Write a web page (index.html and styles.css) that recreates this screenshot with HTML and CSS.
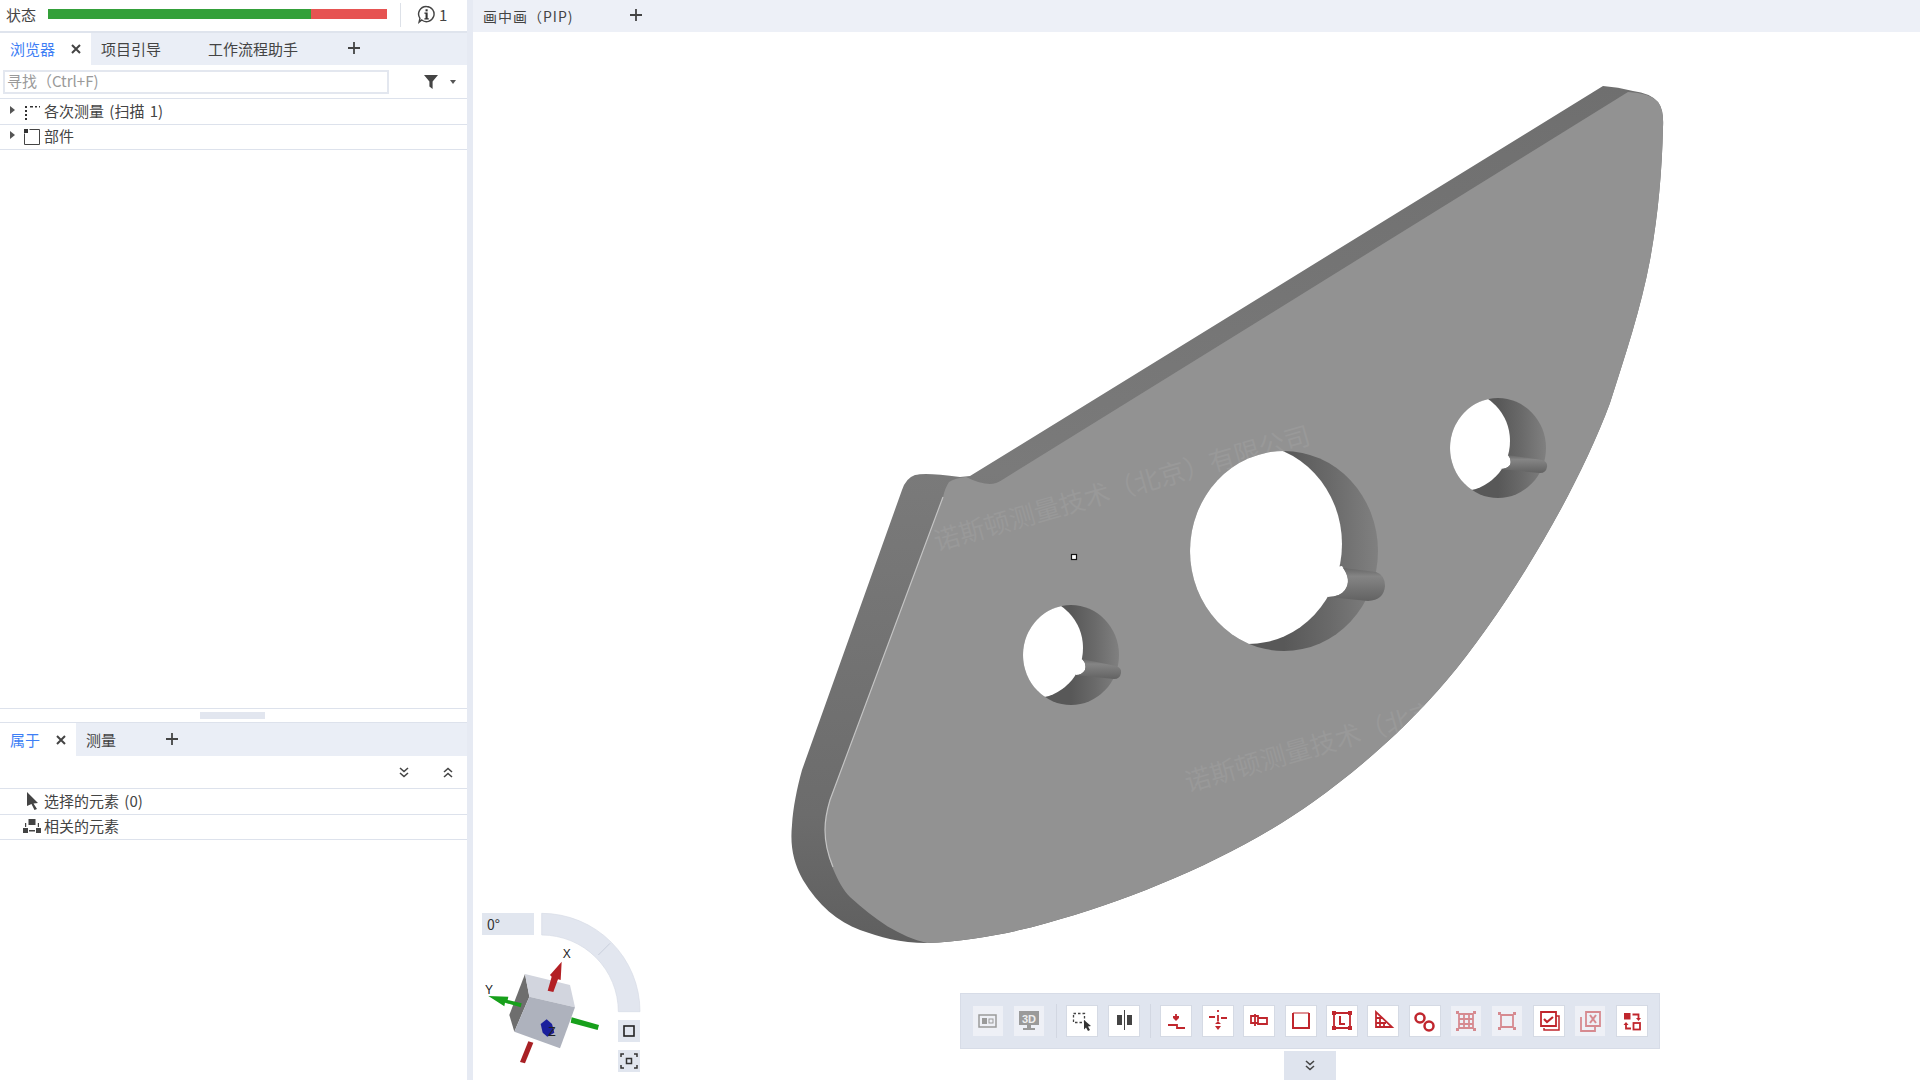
FILE: index.html
```html
<!DOCTYPE html>
<html lang="zh">
<head>
<meta charset="utf-8">
<title>画中画</title>
<link rel="stylesheet" href="styles.css">
</head>
<body>
<div class="app">
  <aside class="side">
    <div class="status">
      <span class="status-label">状态</span>
      <div class="meter"><div class="meter-ok"></div><div class="meter-bad"></div></div>
      <div class="info">
        <svg class="info-icon" viewBox="0 0 20 20"><path d="M10 1.5a8 8 0 1 1-5 14.3L2.2 18l.9-4A8 8 0 0 1 10 1.5z" fill="none" stroke="#444" stroke-width="1.5"/><rect x="9" y="4.5" width="2.2" height="2.2" fill="#333"/><path d="M7.8 8h3.4v6h1.2v1.2H7.800V14h1.200V9.200H7.800z" fill="#333"/></svg>
        <span>1</span>
      </div>
    </div>
    <div class="tabs">
      <div class="tab active tab-browser"><span>浏览器</span><svg class="x" viewBox="0 0 10 10"><path d="M1 1l8 8M9 1l-8 8"/></svg></div>
      <div class="tab tab-guide">项目引导</div>
      <div class="tab tab-flow">工作流程助手</div>
      <svg class="plus" viewBox="0 0 12 12"><path d="M6 0v12M0 6h12"/></svg>
    </div>
    <div class="search-row">
      <div class="search">寻找（Ctrl+F)</div>
      <svg class="funnel" viewBox="0 0 14 14"><path d="M0 0h14L8.600 6.500V14L5.400 11.500v-5z" fill="#444"/></svg>
      <svg class="caret" viewBox="0 0 6 4"><path d="M0 0h6L3 4z" fill="#555"/></svg>
    </div>
    <div class="row">
      <svg class="tri" viewBox="0 0 5 8"><path d="M0 0l5 4-5 4z" fill="#555"/></svg>
      <svg class="row-icon" viewBox="0 0 16 16"><path d="M1 2h2v2H1zM1 6h2v2H1zM1 10h2v2H1zM1 14h2v2H1zM6 2h3v1.400H6zM11 2h2v1.400h-2zM15 2h1v1.400h-1z" fill="#333"/></svg>
      <span class="row-text">各次测量 (扫描 1)</span>
    </div>
    <div class="row row-short">
      <svg class="tri" viewBox="0 0 5 8"><path d="M0 0l5 4-5 4z" fill="#555"/></svg>
      <svg class="row-icon" viewBox="0 0 16 16"><path d="M.5 4.500v11h15V.5h-10" fill="none" stroke="#444"/><rect x="0" y="0" width="4" height="4" fill="#333"/></svg>
      <span class="row-text">部件</span>
    </div>
    <div class="tree-space"></div>
    <div class="splitter"><div class="grip"></div></div>
    <div class="tabs tabs-bottom">
      <div class="tab active tab-props"><span>属于</span><svg class="x" viewBox="0 0 10 10"><path d="M1 1l8 8M9 1l-8 8"/></svg></div>
      <div class="tab tab-measure">测量</div>
      <svg class="plus" viewBox="0 0 12 12"><path d="M6 0v12M0 6h12"/></svg>
    </div>
    <div class="actions">
      <svg class="chev" viewBox="0 0 10 11"><path d="M1 1l4 3.500L9 1M1 6l4 3.500L9 6"/></svg>
      <svg class="chev" viewBox="0 0 10 11"><path d="M1 5l4-3.500L9 5M1 10l4-3.500L9 10"/></svg>
    </div>
    <div class="row">
      <svg class="row-icon row-cursor" viewBox="0 0 14 18"><path d="M2 0l11 11-4.500 .5L12 17l-2.500 1-3-6L2 14z" fill="#444"/></svg>
      <span class="row-text">选择的元素 (0)</span>
    </div>
    <div class="row row-short">
      <svg class="row-icon row-rel" viewBox="0 0 18 14"><path d="M5.500 0h7v6h-7zM0 9h5v5H0zM13 9h5v5h-5zM6 11h6v1.500H6zM2 4h1.200v4H2zM14.800 4H16v4h-1.200z" fill="#444"/></svg>
      <span class="row-text">相关的元素</span>
    </div>
    <div class="props-space"></div>
  </aside>
  <div class="gutter"></div>
  <main class="view">
    <div class="view-tabs">
      <span class="view-title">画中画（PIP)</span>
      <svg class="plus" viewBox="0 0 12 12"><path d="M6 0v12M0 6h12"/></svg>
    </div>
    <div class="canvas"></div>

    <svg class="model" viewBox="473 0 1447 1080">
      <defs>
        <path id="body" d="M970 476L1603 86Q1618 87 1633 91Q1650 93 1658 102Q1664 110 1663 127C1662 172 1658 216 1650 260C1641 308 1625 356 1610 403C1575 497 1505 611 1447 680C1408 726 1362 767 1313 802C1236 857 1134 899 1047 923C1008 934 968 941 927 943C900 943 880 937 860 930C838 922 818 905 803 880C793 862 790 845 792 825C793 808 797 788 802 770L902 490Q906 478 915 475Q925 472 960 477Z"/>
        <path id="face" d="M949 482Q955 478 966 477Q980 484 990 484Q996 484 1002 480L1628 92Q1650 93 1658 102Q1664 110 1663 127C1662 172 1658 216 1650 260C1641 308 1625 356 1610 403C1575 497 1505 611 1447 680C1408 726 1362 767 1313 802C1236 857 1134 899 1047 923C1008 934 968 941 927 943C900 937 875 920 850 897C838 885 825 855 825 830C825 820 827 810 830 800L943 497Q945 488 949 482Z"/>
        <clipPath id="faceClip"><use href="#face"/></clipPath>
        <ellipse id="holeA" cx="1284" cy="551" rx="94" ry="100"/>
        <ellipse id="holeB" cx="1071" cy="655" rx="48" ry="50"/>
        <ellipse id="holeC" cx="1498" cy="448" rx="48" ry="50"/>
        <clipPath id="clipA"><use href="#holeA"/></clipPath>
        <clipPath id="clipB"><use href="#holeB"/></clipPath>
        <clipPath id="clipC"><use href="#holeC"/></clipPath>
        <linearGradient id="bodyGrad" x1="0" y1="0" x2="0" y2="1">
          <stop offset="0" stop-color="#6f6f6f"/><stop offset=".45" stop-color="#7a7a7a"/><stop offset=".85" stop-color="#6c6c6c"/><stop offset="1" stop-color="#5f5f5f"/>
        </linearGradient>
        <linearGradient id="rimGrad" x1="0" y1="0" x2="1" y2="0">
          <stop offset=".5" stop-color="#585858"/><stop offset=".75" stop-color="#6a6a6a"/><stop offset="1" stop-color="#808080"/>
        </linearGradient>
        <linearGradient id="slotGrad" x1="0" y1="0" x2="0" y2="1">
          <stop offset="0" stop-color="#666666"/><stop offset=".25" stop-color="#858585"/><stop offset="1" stop-color="#626262"/>
        </linearGradient>
      </defs>
      <use href="#body" fill="url(#bodyGrad)"/>
      <use href="#face" fill="#929292"/>
      <path class="edge-light" d="M943 497L830 800C827 810 825 820 825 830C825 845 828 855 833 867"/>
      <g clip-path="url(#faceClip)" class="watermark">
        <text x="937" y="551" transform="rotate(-16 937 551)">诺斯顿测量技术（北京）有限公司</text>
        <text x="1188" y="792" transform="rotate(-16 1188 792)">诺斯顿测量技术（北京）有限公司</text>
      </g>

      <use href="#holeA" fill="url(#rimGrad)"/>
      <g clip-path="url(#clipA)"><use href="#holeA" x="-36" y="-7" fill="#fff"/></g>
      <path d="M1342 566Q1352 580 1345 590Q1340 597 1328 597L1318 590L1318 570Z" fill="#fff"/>
      <path d="M1343 568L1376 572Q1385 575 1385 586Q1384 600 1368 601L1328 597Q1340 597 1345 590Q1352 580 1343 568Z" fill="url(#slotGrad)"/>

      <use href="#holeB" fill="url(#rimGrad)"/>
      <g clip-path="url(#clipB)"><use href="#holeB" x="-36" y="-7" fill="#fff"/></g>
      <path d="M1082 659Q1087 664 1085 670Q1082 675 1076 675L1070 665Z" fill="#fff"/>
      <path d="M1082 659L1116 666Q1122 668 1121 673Q1120 679 1114 679L1076 675Q1082 675 1085 670Q1087 664 1082 659Z" fill="url(#slotGrad)"/>

      <use href="#holeC" fill="url(#rimGrad)"/>
      <g clip-path="url(#clipC)"><use href="#holeC" x="-36" y="-7" fill="#fff"/></g>
      <path d="M1508 455Q1512 460 1510 465Q1507 469 1500 469L1495 460Z" fill="#fff"/>
      <path d="M1508 455L1542 460Q1548 462 1547 467Q1546 473 1540 473L1500 469Q1507 469 1510 465Q1512 460 1508 455Z" fill="url(#slotGrad)"/>

      <rect class="marker" x="1071.500" y="554.500" width="5" height="5"/>
    </svg>

    <div class="gizmo">
      <div class="angle">0°</div>
      <svg class="gizmo-art" viewBox="0 0 600 540">
        <path class="arc" d="M215 40A295 295 0 0 1 510 335H445A230 230 0 0 0 215 105Z"/>
        <path class="arc-line" d="M385 165L420 130"/>
        <path d="M165 222L118 345L133 395L178 290Z" fill="#6e6e6e"/>
        <path d="M165 222L300 255L315 322L178 290Z" fill="#d2d5de"/>
        <path d="M178 290L315 322L270 445L133 395Z" fill="#aeb2bd"/>
        <path d="M233 272L245 230L240 225L275 185L272 240L264 238L250 276Z" fill="#b32025"/>
        <path d="M55 288L115 290L113 300L155 310L152 322L105 308L103 319Z" fill="#17a01b"/>
        <path d="M305 352L387 375L383 390L302 368Z" fill="#17a01b"/>
        <path d="M175 424L190 428L165 490L150 486Z" fill="#a82024"/>
        <path d="M212 372L230 358L246 372L253 398L232 410L218 398Z" fill="#1a1f9c"/>
        <text class="axis" x="278" y="175">X</text>
        <text class="axis" x="45" y="282">Y</text>
        <text class="axis" x="235" y="407">Z</text>
      </svg>
      <div class="gz-btn gz-square"><svg viewBox="0 0 22 22"><rect x="6" y="6" width="10" height="10" fill="none" stroke="#222" stroke-width="1.600"/></svg></div>
      <div class="gz-btn gz-focus"><svg viewBox="0 0 22 22"><path d="M3 7V4h3M16 4h3v3M19 15v3h-3M6 18H3v-3" fill="none" stroke="#333" stroke-width="1.500"/><rect x="8.500" y="8.500" width="5" height="5" fill="none" stroke="#333" stroke-width="1.500"/></svg></div>
    </div>

    <div class="toolbar">
      <div class="tool off"><svg viewBox="0 0 30 30"><rect x="6" y="9" width="17" height="12" fill="none" stroke="#9a9a9a" stroke-width="1.500"/><rect x="9" y="12" width="5" height="6" fill="#9a9a9a"/><rect x="16" y="13" width="4" height="4" fill="none" stroke="#9a9a9a"/></svg></div>
      <div class="tool off"><svg viewBox="0 0 30 30"><rect x="5" y="5" width="20" height="14" fill="#9a9a9a"/><text class="t3d" x="15" y="16.500">3D</text><path d="M13 19h4v3h4v2H9v-2h4z" fill="#9a9a9a"/></svg></div>
      <div class="sep"></div>
      <div class="tool"><svg viewBox="0 0 30 30"><rect x="6.500" y="7.500" width="11" height="9" fill="none" stroke="#444" stroke-width="1.300" stroke-dasharray="2.500 2"/><path d="M17 14l7 6-3 .5 2 3.500-2 1-2-3.500-2 2z" fill="#333"/></svg></div>
      <div class="tool"><svg viewBox="0 0 30 30"><rect x="8" y="9" width="5" height="10" fill="#444"/><rect x="18" y="9" width="5" height="10" fill="#444"/><path d="M15.500 4v20" stroke="#444" stroke-width="1"/></svg></div>
      <div class="sep"></div>
      <div class="tool"><svg class="red" viewBox="0 0 30 30"><path d="M7 19h9v3h8"/><path d="M15 8v6M12 11h6"/><path class="fill" d="M12 12h6l-3 3z"/></svg></div>
      <div class="tool"><svg class="red" viewBox="0 0 30 30"><path d="M6 11h6M18 12h6M15 4v2M15 9v6"/><path class="fill" d="M12 18h6l-3-3zM12 20h6l-3 4z"/></svg></div>
      <div class="tool"><svg class="red" viewBox="0 0 30 30"><path d="M7 10h7v7H7zM14 12h9v6h-9zM11 8v12"/></svg></div>
      <div class="tool"><svg class="red" viewBox="0 0 30 30"><path d="M7 7v15h16V7" stroke-width="2"/><path d="M7 7h16" stroke-width="1"/></svg></div>
      <div class="tool"><svg class="red" viewBox="0 0 30 30"><path d="M7 7h16v15H7z"/><path d="M13 10v8h5" stroke-width="2"/><path class="fill" d="M5 5h4v4H5zM21 5h4v4h-4zM5 20h4v4H5zM21 20h4v4h-4z"/></svg></div>
      <div class="tool"><svg class="red" viewBox="0 0 30 30"><path d="M8 6v15h16z" stroke-width="1.800"/><path d="M8 12h6M8 17h10M12 12v8M16 16v5"/></svg></div>
      <div class="tool"><svg class="red" viewBox="0 0 30 30"><circle cx="10" cy="12" r="4.500" stroke-width="2.500"/><circle cx="19" cy="20" r="4.500" stroke-width="2.500"/></svg></div>
      <div class="tool off"><svg class="red faint" viewBox="0 0 30 30"><path d="M8 8h14v14H8zM8 13h14M8 18h14M13 8v14M18 8v14"/><path class="fill" d="M5 5h3v3H5zM22 5h3v3h-3zM5 22h3v3H5zM22 22h3v3h-3z"/></svg></div>
      <div class="tool off"><svg class="red faint" viewBox="0 0 30 30"><path d="M9 9h12v12H9z"/><path class="fill" d="M6 6h3v3H6zM21 6h3v3h-3zM6 21h3v3H6zM21 21h3v3h-3z"/></svg></div>
      <div class="tool"><svg class="red" viewBox="0 0 30 30"><path d="M7 6h15v14H7z" stroke-width="1.800"/><path d="M10 22v2h15V10h-3" stroke-width="1.500"/><path d="M10 13l3 3 6-5" stroke-width="2.200"/></svg></div>
      <div class="tool off"><svg class="red faint" viewBox="0 0 30 30"><path d="M11 6h14v14H11zM6 11v14h14v-5"/><path d="M15 9l6 8M21 9l-6 8" stroke-width="2"/></svg></div>
      <div class="tool"><svg class="red" viewBox="0 0 30 30"><rect class="fill" x="7" y="7" width="6.500" height="6.500"/><path d="M15.500 8.500h6v4"/><path class="fill" d="M19 12h5l-2.500 3z"/><rect x="16.500" y="17" width="6.500" height="6.500"/><path d="M14 22.500H9v-4"/><path class="fill" d="M6.500 19h5L9 16z"/></svg></div>
    </div>
    <div class="expander"><svg class="chev" viewBox="0 0 10 11"><path d="M1 1l4 3.500L9 1M1 6l4 3.500L9 6"/></svg></div>
  </main>
</div>
</body>
</html>
```

FILE: styles.css
```css
* { box-sizing: border-box; }
html, body { margin: 0; height: 100%; }
body {
  font-family: "Noto Sans CJK SC", "Liberation Sans", sans-serif;
  font-size: 15px;
  color: #444;
  background: #fff;
  overflow: hidden;
}
.app { display: flex; width: 1920px; height: 1080px; }
.side { width: 467px; display: flex; flex-direction: column; background: #fff; }
.gutter { width: 6px; background: #e6eaf3; }

.status { height: 33px; display: flex; align-items: center; padding: 0 0 2px 6px; border-bottom: 2px solid #dfe4ed; flex: none; }
.status-label { width: 42px; line-height: 20px; }
.meter { width: 339px; height: 10px; display: flex; margin-top: -1px; }
.meter-ok { width: 263px; background: #34a03a; }
.meter-bad { flex: 1; background: #e65352; }
.info { margin-left: 13px; height: 24px; padding-left: 16px; border-left: 1px solid #dde1e8; display: flex; align-items: center; gap: 3px; }
.info-icon { width: 19px; height: 19px; }

.tabs { height: 32px; display: flex; align-items: center; background: #eaeef6; flex: none; }
.tabs-bottom { height: 33px; }
.tab { height: 100%; display: flex; align-items: center; line-height: 20px; }
.tab.active { background: #fff; color: #3d7ef5; padding-left: 10px; }
.tab-browser { width: 91px; gap: 16px; }
.tab-props { width: 76px; gap: 16px; }
.tab-guide { margin-left: 10px; width: 107px; }
.tab-flow { width: 140px; }
.tab-measure { margin-left: 10px; width: 80px; }
.x { width: 10px; height: 10px; fill: none; stroke: #444; stroke-width: 2; }
.plus { width: 12px; height: 12px; fill: none; stroke: #444; stroke-width: 1.800; flex: none; margin-top: -2px; }

.search-row { height: 34px; display: flex; align-items: center; padding: 0 0 0 3px; border-bottom: 1px solid #dde2ec; flex: none; }
.search { width: 386px; height: 24px; border: 2px solid #e3e7ef; color: #9a9a9a; line-height: 18px; padding-left: 2px; }
.funnel { width: 14px; height: 14px; margin-left: 35px; }
.caret { width: 6px; height: 4px; margin-left: 12px; }

.row { height: 26px; display: flex; align-items: center; border-bottom: 1px solid #dde2ec; flex: none; }
.row-short { height: 25px; }
.tri { width: 5px; height: 8px; margin-left: 10px; margin-top: -4px; }
.row-icon { width: 16px; height: 16px; margin-left: 9px; }
.row-text { margin-left: 4px; margin-top: -2px; line-height: 20px; word-spacing: 2px; }
.row-cursor { width: 14px; height: 18px; margin-left: 25px; margin-top: -2px; }
.row-cursor + .row-text { margin-left: 5px; }
.row-rel { width: 18px; height: 14px; margin-left: 23px; margin-top: -3px; }
.row-rel + .row-text { margin-left: 3px; }

.tree-space { height: 558px; flex: none; }
.props-space { flex: 1; }
.splitter { height: 15px; border-top: 1px solid #dde2ec; border-bottom: 1px solid #dde2ec; display: flex; justify-content: center; align-items: center; padding-right: 2px; flex: none; }
.grip { width: 65px; height: 7px; background: #e2e6ef; }

.actions { height: 33px; display: flex; align-items: center; justify-content: flex-end; padding: 1px 14px 0 0; gap: 34px; border-bottom: 1px solid #dde2ec; flex: none; }
.chev { width: 10px; height: 11px; fill: none; stroke: #444; stroke-width: 1.600; }

.view { flex: 1; display: flex; flex-direction: column; position: relative; }
.view-tabs { height: 32px; background: #edf0f7; display: flex; align-items: center; padding-left: 10px; flex: none; }
.view-title { width: 147px; line-height: 20px; font-size: 14px; letter-spacing: 1px; }
.canvas { flex: 1; background: #fff; }

.model { position: absolute; left: 0; top: 0; width: 1447px; height: 1080px; pointer-events: none; }
.edge-light { fill: none; stroke: #c4c4c4; stroke-width: 1.200; }
.watermark { fill: #999999; font-size: 26px; font-family: "Noto Sans CJK SC", sans-serif; }
.marker { fill: #fff; stroke: #111; stroke-width: 1.200; }

.gizmo { position: absolute; left: -3px; top: 900px; width: 200px; height: 180px; }
.gizmo-art { position: absolute; left: 0; top: 0; width: 200px; height: 180px; }
.arc { fill: #e2e6ef; stroke: #d6dbe6; stroke-width: 2; }
.arc-line { stroke: #c9cfdc; stroke-width: 3; }
.axis { font-family: "Liberation Sans", sans-serif; font-size: 36px; fill: #222; }
.angle { position: absolute; left: 12px; top: 13px; width: 52px; height: 22px; background: #e1e6ef; font-size: 14px; line-height: 22px; padding-left: 5px; color: #333; z-index: 1; }
.gz-btn { position: absolute; left: 148px; width: 22px; height: 22px; background: #e1e6ef; }
.gz-btn svg { display: block; width: 22px; height: 22px; }
.gz-square { top: 120px; }
.gz-focus { top: 150px; }

.toolbar { position: absolute; left: 487px; top: 993px; width: 700px; height: 56px; background: #e0e5ef; border: 1px solid #d7dce7; display: flex; align-items: center; gap: 11.400px; padding-left: 12px; }
.tool { width: 30px; height: 30px; background: #fff; flex: none; box-shadow: 0 0 0 1px #d5dae4; }
.tool svg { display: block; width: 30px; height: 30px; }
.tool.off { background: #eef0f6; box-shadow: none; }
.sep { width: 1px; height: 34px; background: #d2d7e2; margin-right: -1px; flex: none; }
.t3d { font-family: "Liberation Sans", sans-serif; font-size: 11px; font-weight: 700; fill: #eee; text-anchor: middle; }
.red { fill: none; stroke: #c0262d; stroke-width: 1.800; }
.red .fill { fill: #c0262d; stroke: none; }
.red.faint { opacity: .5; }
.expander { position: absolute; left: 811px; top: 1051px; width: 52px; height: 29px; background: #dfe4ee; display: flex; align-items: center; justify-content: center; }
```
